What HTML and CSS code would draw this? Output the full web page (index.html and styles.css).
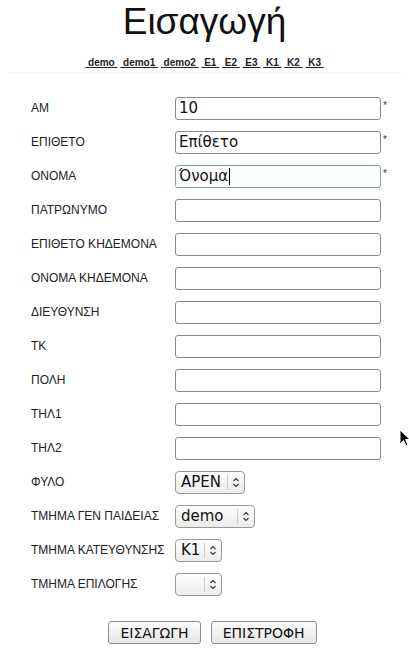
FILE: index.html
```html
<!DOCTYPE html>
<html lang="el">
<head>
<meta charset="utf-8">
<title>Εισαγωγή</title>
<link rel="stylesheet" href="styles.css">
</head>
<body>
<h1 class="title">Εισαγωγή</h1>
<nav class="links">
  <a href="#">&nbsp;demo&nbsp;</a> <a href="#">&nbsp;demo1&nbsp;</a> <a href="#">&nbsp;demo2&nbsp;</a> <a href="#">&nbsp;E1&nbsp;</a> <a href="#">&nbsp;E2&nbsp;</a> <a href="#">&nbsp;E3&nbsp;</a> <a href="#">&nbsp;K1&nbsp;</a> <a href="#">&nbsp;K2&nbsp;</a> <a href="#">&nbsp;K3&nbsp;</a>
</nav>
<div class="rule"></div>
<form class="form">
  <label class="lbl">AM</label><input class="inp" value="10"><span class="req">*</span>
  <label class="lbl">ΕΠΙΘΕΤΟ</label><input class="inp" value="Επίθετο"><span class="req">*</span>
  <label class="lbl">ΟΝΟΜΑ</label><div class="inp focus">Όνομα<span class="caret"></span></div><span class="req">*</span>
  <label class="lbl">ΠΑΤΡΩΝΥΜΟ</label><input class="inp"><span></span>
  <label class="lbl">ΕΠΙΘΕΤΟ ΚΗΔΕΜΟΝΑ</label><input class="inp"><span></span>
  <label class="lbl">ΟΝΟΜΑ ΚΗΔΕΜΟΝΑ</label><input class="inp"><span></span>
  <label class="lbl">ΔΙΕΥΘΥΝΣΗ</label><input class="inp"><span></span>
  <label class="lbl">ΤΚ</label><input class="inp"><span></span>
  <label class="lbl">ΠΟΛΗ</label><input class="inp"><span></span>
  <label class="lbl">ΤΗΛ1</label><input class="inp"><span></span>
  <label class="lbl">ΤΗΛ2</label><input class="inp"><span></span>
  <label class="lbl">ΦΥΛΟ</label><div class="sel w70"><span class="val">APEN</span><span class="arr"><svg width="8" height="11" viewBox="0 0 8 11"><path d="M1.5 4 L4 1.5 L6.5 4 M1.5 7 L4 9.5 L6.5 7" fill="none" stroke="#333" stroke-width="1.1"/></svg></span></div><span></span>
  <label class="lbl">ΤΜΗΜΑ ΓΕΝ ΠΑΙΔΕΙΑΣ</label><div class="sel w80"><span class="val">demo</span><span class="arr"><svg width="8" height="11" viewBox="0 0 8 11"><path d="M1.5 4 L4 1.5 L6.5 4 M1.5 7 L4 9.5 L6.5 7" fill="none" stroke="#333" stroke-width="1.1"/></svg></span></div><span></span>
  <label class="lbl">ΤΜΗΜΑ ΚΑΤΕΥΘΥΝΣΗΣ</label><div class="sel w47"><span class="val">K1</span><span class="arr"><svg width="8" height="11" viewBox="0 0 8 11"><path d="M1.5 4 L4 1.5 L6.5 4 M1.5 7 L4 9.5 L6.5 7" fill="none" stroke="#333" stroke-width="1.1"/></svg></span></div><span></span>
  <label class="lbl">ΤΜΗΜΑ ΕΠΙΛΟΓΗΣ</label><div class="sel w47"><span class="val"></span><span class="arr"><svg width="8" height="11" viewBox="0 0 8 11"><path d="M1.5 4 L4 1.5 L6.5 4 M1.5 7 L4 9.5 L6.5 7" fill="none" stroke="#333" stroke-width="1.1"/></svg></span></div><span></span>
</form>
<div class="buttons">
  <button class="btn" type="button">ΕΙΣΑΓΩΓΗ</button>
  <button class="btn" type="button">ΕΠΙΣΤΡΟΦΗ</button>
</div>
<svg class="pointer" width="12" height="19" viewBox="0 0 12 19"><path d="M1 1 L1 15 L4.5 11.5 L7 17 L9 16 L6.5 10.5 L11 10.5 Z" fill="#000" stroke="#fff" stroke-width="1"/></svg>
</body>
</html>
```
FILE: styles.css
```css
html, body {
  margin: 0;
  padding: 0;
  background: #fff;
}
body {
  width: 409px;
  height: 655px;
  position: relative;
  overflow: hidden;
  font-family: "Liberation Sans", Arial, sans-serif;
  color: #222;
}
.title {
  margin: 0;
  padding-top: 1px;
  text-align: center;
  font-weight: normal;
  font-size: 37px;
  line-height: 42px;
  color: #111;
}
.links {
  margin-top: 14px;
  text-align: center;
  font-size: 10px;
  font-weight: bold;
  line-height: 12px;
}
.links a {
  color: #222;
  text-decoration: underline;
}
.rule {
  height: 1px;
  background: #f0f0f0;
  margin: 3px 8px 0;
}
.form {
  display: grid;
  grid-template-columns: 144px 206px 10px;
  grid-auto-rows: 34px;
  align-items: center;
  padding-left: 31px;
  margin-top: 18px;
}
.lbl {
  font-size: 12px;
  color: #222;
}
.inp {
  box-sizing: border-box;
  width: 206px;
  height: 23px;
  border: 1px solid #8a8a8a;
  border-radius: 3px;
  font-family: "DejaVu Sans", sans-serif;
  font-size: 15px;
  padding: 0 3px;
  color: #111;
  background: #fff;
  outline: none;
  display: flex;
  align-items: center;
}
.focus {
  border-color: #7b9bd0;
}
.caret {
  display: inline-block;
  width: 1px;
  height: 17px;
  background: #000;
  margin-left: 1px;
}
.req {
  font-size: 10px;
  padding-left: 2px;
  align-self: start;
  padding-top: 9px;
  color: #333;
}
.sel {
  box-sizing: border-box;
  height: 23px;
  border: 1px solid #999;
  border-radius: 4px;
  background: linear-gradient(#fdfdfd, #ececec);
  display: flex;
  align-items: center;
  font-family: "DejaVu Sans", sans-serif;
  font-size: 15px;
  color: #111;
}
.w70 { width: 70px; }
.w80 { width: 80px; }
.w47 { width: 47px; }
.val {
  flex: 1;
  padding-left: 5px;
  white-space: nowrap;
}
.arr {
  width: 16px;
  height: 15px;
  border-left: 1px solid #ccc;
  display: flex;
  align-items: center;
  justify-content: center;
}
.buttons {
  display: flex;
  justify-content: center;
  gap: 10px;
  margin-top: 20px;
  padding-left: 16px;
}
.btn {
  box-sizing: border-box;
  height: 23px;
  padding: 0 11px;
  border: 1px solid #8d8d8d;
  border-radius: 3px;
  background: linear-gradient(#fbfbfb, #e6e6e6);
  font-family: "DejaVu Sans", sans-serif;
  font-size: 14px;
  color: #111;
}
.pointer {
  position: absolute;
  left: 399px;
  top: 429px;
}
```
